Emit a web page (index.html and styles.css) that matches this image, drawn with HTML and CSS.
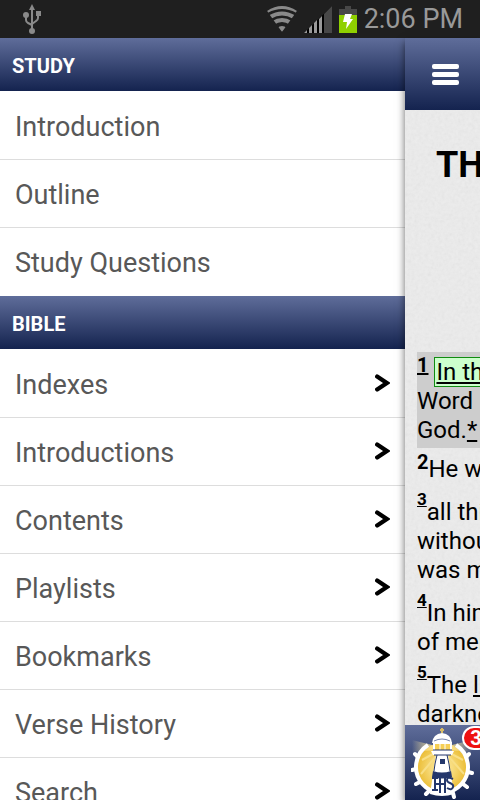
FILE: index.html
```html
<!DOCTYPE html>
<html lang="en">
<head>
    <meta charset="UTF-8">
    <meta name="viewport" content="width=device-width, initial-scale=1.0">
    <title>Study Bible</title>
    <link rel="stylesheet" href="styles.css">
</head>
<body>
    <div class="status-bar">
        <svg class="usb" width="20" height="30" viewBox="0 0 20 30" fill="none" stroke="#8a8a8a" stroke-width="2">
            <path d="M10 5v20M4 12v4q0 2 2 3l4 2M16 10v4q0 2-2 3l-4 3"/>
            <path d="M10 0l3 6H7zM14 7h5v5h-5z" fill="#8a8a8a" stroke="none"/>
            <circle cx="4" cy="11" r="3" fill="#8a8a8a" stroke="none"/>
            <circle cx="10" cy="27" r="3" fill="#8a8a8a" stroke="none"/>
        </svg>
        <div class="status-right">
            <svg width="30" height="26" viewBox="0 0 30 26">
                <clipPath id="fan"><path d="M15 26L0 5Q15-5 30 5z"/></clipPath>
                <g clip-path="url(#fan)" fill="none" stroke="#8a8a8a" stroke-width="4">
                    <path d="M0 5q15-8 30 0M3 11q12-7 24 0M6 17q9-6 18 0" />
                    <path d="M10 22q5-4 10 0l-5 4z" fill="#8a8a8a" stroke="none"/>
                </g>
            </svg>
            <svg width="28" height="27" viewBox="0 0 28 27">
                <path d="M0 27L28 0v27z" fill="#000"/>
                <path d="M20 8l8-8v27h-8z" fill="#484848"/>
                <path d="M0 27l3-3v3zM5 22l3-3v8H5zM10 17l3-3v13h-3zM15 13l3-3v17h-3z" fill="#999"/>
            </svg>
            <svg width="18" height="27" viewBox="0 0 18 27">
                <path d="M6 0h6v3h6v6H0V3h6z" fill="#484848"/>
                <path d="M0 9h18v18H0z" fill="#8fd000"/>
                <path d="M6 8h7l-2 5h3L7 23l1-7H4z" fill="#fff"/>
            </svg>
            <span class="clock">2:06 PM</span>
        </div>
    </div>

    <div class="app">
        <nav class="menu">
            <h2 class="bar">STUDY</h2>
            <ul>
                <li><a href="#introduction">Introduction</a></li>
                <li><a href="#outline">Outline</a></li>
                <li><a href="#questions">Study Questions</a></li>
            </ul>
            <h2 class="bar">BIBLE</h2>
            <ul>
                <li><a href="#indexes">Indexes <svg class="arrow" viewBox="0 0 14 18"><path d="M2 3l9 6-9 6"/></svg></a></li>
                <li><a href="#introductions">Introductions <svg class="arrow" viewBox="0 0 14 18"><path d="M2 3l9 6-9 6"/></svg></a></li>
                <li><a href="#contents">Contents <svg class="arrow" viewBox="0 0 14 18"><path d="M2 3l9 6-9 6"/></svg></a></li>
                <li><a href="#playlists">Playlists <svg class="arrow" viewBox="0 0 14 18"><path d="M2 3l9 6-9 6"/></svg></a></li>
                <li><a href="#bookmarks">Bookmarks <svg class="arrow" viewBox="0 0 14 18"><path d="M2 3l9 6-9 6"/></svg></a></li>
                <li><a href="#history">Verse History <svg class="arrow" viewBox="0 0 14 18"><path d="M2 3l9 6-9 6"/></svg></a></li>
                <li><a href="#search">Search <svg class="arrow" viewBox="0 0 14 18"><path d="M2 3l9 6-9 6"/></svg></a></li>
            </ul>
        </nav>

        <main class="reader">
            <header class="reader-header">
                <button class="menu-button" aria-label="Menu"><span></span><span></span><span></span></button>
            </header>
            <article class="page">
                <h1>THE</h1>
                <p class="verse selected"><a class="num large" href="#v1">1</a> <a class="mark" href="#n1">In the</a><br>Word<br>God.<a href="#n2">*</a></p>
                <p class="verse tight"><b class="num large">2</b>He was</p>
                <p class="verse"><a class="num" href="#v3">3</a>all things<br>without<br>was made</p>
                <p class="verse"><a class="num" href="#v4">4</a>In him<br>of men</p>
                <p class="verse"><a class="num" href="#v5">5</a>The <a href="#n5">light</a><br>darkness</p>
            </article>
            <footer class="reader-footer">
                <button class="logo" aria-label="Notes">
                    <svg width="64" height="72" viewBox="0 0 64 72">
                        <defs>
                            <linearGradient id="beam-left"><stop stop-color="#fff0b0" stop-opacity="0"/><stop offset="1" stop-color="#fbe08a"/></linearGradient>
                            <linearGradient id="beam-right"><stop stop-color="#fbe08a"/><stop offset="1" stop-color="#fff0b0" stop-opacity="0"/></linearGradient>
                            <radialGradient id="sun"><stop offset=".4" stop-color="#f8dd80"/><stop offset="1" stop-color="#ebbd35"/></radialGradient>
                        </defs>
                        <circle cx="31" cy="41" r="25" fill="url(#sun)"/>
                        <path d="M31 22L11 33M31 22l21 11M31 22L10 47M31 22l22 25" stroke="#f8df86" stroke-width="2"/>
                        <path d="M1 13l24 6v4L1 25z" fill="url(#beam-left)"/>
                        <path d="M61 13l-24 6v4l24 2z" fill="url(#beam-right)"/>
                        <path d="M17 18A26 26 0 1 0 45 18" fill="none" stroke="#fff" stroke-width="4"/>
                        <g stroke="#fff" stroke-width="4" stroke-linecap="round">
                            <path d="M7 30l-3-3M5 42l-4 1M9 55l-4 2M18 64l-3 3M42 66l1 4M52 57l4 3M57 45l4 1M55 30l3-3"/>
                        </g>
                        <path d="M19 67l6-39h12l6 39q-12 4-24 0z" fill="#fff"/>
                        <path d="M23 44l1-7 2-9M39 44l-1-7-2-9" fill="none" stroke="#24376b"/>
                        <path d="M22 44q9 3 18 0l1 6q-10 3-20 0z" fill="#24376b"/>
                        <path d="M21 16q1-9 10-10 9 1 10 10z" fill="#fff"/>
                        <path d="M23 14q8-4 16 0" fill="none" stroke="#7784aa"/>
                        <path d="M23 16h17v8H23z" fill="#f6cf55" stroke="#fff" stroke-width="2"/>
                        <path d="M29 16v8M34 16v8" stroke="#fff"/>
                        <path d="M20 24h23l-2 4H22z" fill="#fff"/>
                        <path d="M23 28h17M22 23h19" stroke="#24376b"/>
                        <path d="M29 32h5v5h-5z" fill="#24376b"/>
                        <path d="M31 1v5M29 3h4" stroke="#d8bc68" stroke-width="2"/>
                        <path d="M24 51v12M29 49v17M34 49v17M24 57h10M21 51h6M21 63h6M42 52q-6-3-6 1 0 2 3 3 4 2 3 4-1 4-6 1" fill="none" stroke="#24376b" stroke-width="2"/>
                    </svg>
                    <span class="badge">3</span>
                </button>
            </footer>
        </main>
    </div>
</body>
</html>
```
FILE: styles.css
```css
* {
    box-sizing: border-box;
}
body {
    margin: 0;
    height: 100vh;
    display: flex;
    flex-direction: column;
    overflow: hidden;
    font-family: Roboto, "Liberation Sans", sans-serif;
    background: #fff;
}
h1, h2, ul, p {
    margin: 0;
    padding: 0;
}
button {
    border: 0;
    padding: 0;
    background: none;
    cursor: pointer;
}
svg {
    display: block;
}
.status-bar {
    flex: none;
    display: flex;
    justify-content: space-between;
    align-items: center;
    height: 38px;
    padding: 0 17px 0 22px;
    background: #1f1f1f;
}
.status-right {
    display: flex;
    align-items: center;
    gap: 7px;
}
.clock {
    color: #999;
    font-size: 27px;
    line-height: 38px;
}
.app {
    flex: 1;
    min-height: 0;
    display: flex;
}
.menu {
    flex: 1;
    overflow: hidden;
}
.menu ul {
    list-style: none;
    padding-top: 1px;
}
.bar {
    height: 53px;
    padding: 0 12px;
    color: #fff;
    font-size: 20px;
    line-height: 56px;
    font-weight: 700;
}
.bar, .reader-header, .reader-footer {
    background: linear-gradient(#5f6d9a, #14234f);
}
.menu li a {
    display: flex;
    justify-content: space-between;
    align-items: center;
    height: 68px;
    padding: 2px 15px 0;
    border-bottom: 1px solid #ddd;
    color: #585858;
    font-size: 27px;
    text-decoration: none;
}
.menu li:last-child a {
    border-bottom-color: transparent;
}
.arrow {
    width: 15px;
    height: 20px;
    margin-bottom: 4px;
    fill: none;
    stroke: #000;
    stroke-width: 4;
    stroke-linecap: round;
}

/* the reader stays pushed to the right while the menu is open */
.reader {
    flex: none;
    width: 75px;
    z-index: 1;
    display: flex;
    flex-direction: column;
    overflow: hidden;
    box-shadow: 0 4px 8px rgba(0, 0, 0, 0.6);
    background-color: #ececec;
}
.reader-header {
    flex: none;
    display: flex;
    align-items: center;
    height: 72px;
    padding-left: 27px;
}
.menu-button {
    display: grid;
    gap: 3px;
}
.menu-button span {
    width: 27px;
    height: 5px;
    border-radius: 2px;
    background: #fff;
}
.page {
    flex: 1;
    min-height: 0;
    overflow: hidden;
    padding: 30px 0 0 12px;
    white-space: nowrap;
    color: #000;
    font-size: 24px;
    line-height: 29px;
    background-image: url("data:image/svg+xml,%3Csvg xmlns='http://www.w3.org/2000/svg' width='120' height='120'%3E%3Cfilter id='n'%3E%3CfeTurbulence type='fractalNoise' baseFrequency='.3' numOctaves='2' stitchTiles='stitch'/%3E%3CfeColorMatrix type='saturate' values='0'/%3E%3C/filter%3E%3Crect width='120' height='120' filter='url(%23n)' opacity='.12'/%3E%3C/svg%3E");
}
.page h1 {
    height: 212px;
    padding-left: 19px;
    font-size: 36px;
    line-height: 50px;
}
.page a {
    color: inherit;
}
.verse {
    padding-top: 14px;
}
.verse.tight {
    padding-top: 7px;
}
.verse.selected {
    padding: 6px 0 3px;
    background: #cdcdcd;
}
.num {
    font-size: 17px;
    line-height: 1px;
    font-weight: 700;
    vertical-align: 15px;
}
.num.large {
    font-size: 20px;
    vertical-align: 8px;
}
.mark {
    padding: 0 1px;
    border: 1px solid #118c11;
    background: #ccffcc;
}
.reader-footer {
    flex: none;
    height: 75px;
    padding: 2px 0 0 6px;
}
.logo {
    position: relative;
}
.badge {
    position: absolute;
    top: -1px;
    left: 51px;
    width: 28px;
    height: 24px;
    border: 2px solid #fff;
    border-radius: 12px;
    background: #ee1111;
    color: #fff;
    font: 700 20px/20px Roboto, sans-serif;
}
```
